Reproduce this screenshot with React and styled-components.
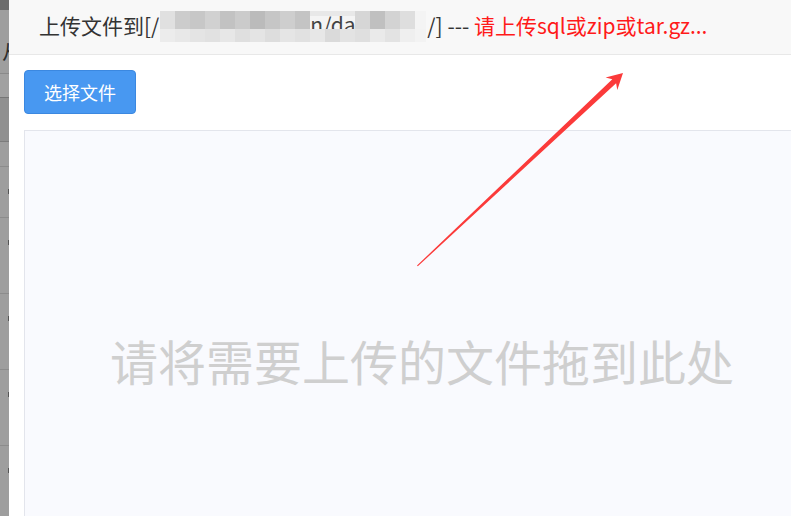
import React from 'react';
import styled, { createGlobalStyle } from 'styled-components';

const GlobalStyle = createGlobalStyle`
    html, body {
        margin: 0;
        padding: 0;
        overflow: hidden;
        background: #9c9c9c;
    }
    body {
        font-family: "Noto Sans CJK SC", "Noto Sans", sans-serif;
    }
`;

const backdropRows = [
    { h: 9, bg: '#6c6c6c', line: '#6c6c6c' },
    { h: 63, bg: '#9e9e9e', line: '#8a8a8a', glyph: '从' },
    { h: 23, bg: '#a1a1a1', line: '#767676' },
    { h: 43, bg: '#909090', line: '#7c7c7c' },
    { h: 24, bg: '#9e9e9e', line: '#8c8c8c' },
    { h: 50, bg: '#9e9e9e', line: '#8c8c8c', tick: true },
    { h: 75, bg: '#9e9e9e', line: '#8c8c8c', tick: true },
    { h: 75, bg: '#9e9e9e', line: '#8c8c8c', tick: true },
    { h: 75, bg: '#9e9e9e', line: '#8c8c8c', tick: true },
    { h: 75, bg: '#9e9e9e', line: '#8c8c8c', tick: true },
];

const mosaicTop = ['#e0e0e0', '#cccccc', '#c7c7c7', '#d1d1d1', '#c2c2c2', '#cbcbcb', '#bbbbbb', '#c6c6c6', '#cecece', '#c4c4c4'];
const mosaicTail = ['#d6d6d6', '#c0c0c0', '#d3d3d3', '#dedede'];
const mosaicBottom = ['#ececec', '#e8e8e8', '#e4e4e4', '#e1e1e1', '#e7e7e7', '#dfdfdf', '#e4e4e4', '#dddddd', '#e5e5e5', '#e1e1e1', '#e7e7e7', '#dadada', '#e3e3e3', '#dfdfdf', '#eaeaea', '#e3e3e3', '#efefef', '#f3f3f3'];

const App = () => {
    return (
        <>
            <GlobalStyle />
            <Page>
                <Backdrop>
                    {backdropRows.map((r, i) => (
                        <BackdropRow key={i} $h={r.h} $bg={r.bg} $line={r.line}>
                            {r.glyph && <Glyph>{r.glyph}</Glyph>}
                            {r.tick && <Tick />}
                        </BackdropRow>
                    ))}
                </Backdrop>
                <Modal>
                    <Title>
                        上传文件到[/
                        <Mosaic>
                            <MosaicRow $h={18}>
                                {mosaicTop.map((c, i) => (
                                    <Cell key={i} $w={15} $bg={c} />
                                ))}
                                <PeekText>n/da</PeekText>
                                {mosaicTail.map((c, i) => (
                                    <Cell key={i} $w={15} $bg={c} />
                                ))}
                                <Cell $w={11} $bg="#f4f4f4" />
                            </MosaicRow>
                            <MosaicRow $h={13}>
                                {mosaicBottom.map((c, i) => (
                                    <Cell key={i} $w={15} $bg={c} />
                                ))}
                            </MosaicRow>
                        </Mosaic>
                        /] --- <Hint>请上传sql或zip或tar.gz...</Hint>
                    </Title>
                    <Body>
                        <PickButton>选择文件</PickButton>
                        <DropZone>请将需要上传的文件拖到此处</DropZone>
                    </Body>
                </Modal>
                <Arrow viewBox="0 0 240 220">
                    <polygon
                        fill="#fb3a3a"
                        points="17,205.5 212.3,19.3 205.6,17.6 223,13 217.3,29.9 216.1,23.2 17.8,206.3"
                    />
                </Arrow>
            </Page>
        </>
    );
};

const Page = styled.div`
    position: relative;
    display: flex;
    width: 791px;
    height: 516px;
    overflow: hidden;
`;

const Backdrop = styled.div`
    width: 9px;
    flex-shrink: 0;
    display: flex;
    flex-direction: column;
    overflow: hidden;
`;

const BackdropRow = styled.div`
    position: relative;
    height: ${p => p.$h}px;
    flex-shrink: 0;
    background: ${p => p.$bg};
    border-bottom: 1px solid ${p => p.$line};
    overflow: hidden;
    display: flex;
    align-items: center;
`;

const Glyph = styled.span`
    margin-left: 2px;
    margin-top: 20px;
    font-size: 20px;
    line-height: 1;
    color: #2e2e2e;
`;

const Tick = styled.span`
    position: absolute;
    right: 0;
    top: 22px;
    width: 1px;
    height: 5px;
    background: #555;
`;

const Modal = styled.div`
    width: 826px;
    flex-shrink: 0;
    display: flex;
    flex-direction: column;
    background: #fff;
    box-shadow: -1px 0 3px rgba(0, 0, 0, 0.15);
`;

const Title = styled.div`
    height: 55px;
    flex-shrink: 0;
    box-sizing: border-box;
    padding: 0 0 5px 30px;
    display: flex;
    align-items: center;
    background: #f8f8f8;
    border-bottom: 1px solid #e8e8e8;
    font-size: 21px;
    color: #333;
    white-space: pre;
`;

const Mosaic = styled.span`
    display: inline-flex;
    flex-direction: column;
    width: 266px;
    height: 31px;
    margin: 4px 1px 0;
    overflow: hidden;
`;

const MosaicRow = styled.span`
    display: flex;
    height: ${p => p.$h}px;
    flex-shrink: 0;
`;

const Cell = styled.span`
    display: block;
    width: ${p => p.$w}px;
    flex-shrink: 0;
    background: ${p => p.$bg};
`;

const PeekText = styled.span`
    display: block;
    width: 45px;
    flex-shrink: 0;
    font-size: 21px;
    line-height: 18px;
    height: 18px;
    overflow: hidden;
    color: #444;
    background: linear-gradient(#e8e8e8 0 5px, #f4f4f4 5px);
    padding-top: 4px;
    box-sizing: border-box;
`;

const Hint = styled.span`
    color: #ff1a1a;
`;

const Body = styled.div`
    display: flex;
    flex-direction: column;
    align-items: flex-start;
    gap: 16px;
    padding: 15px;
`;

const PickButton = styled.button`
    width: 112px;
    height: 44px;
    flex-shrink: 0;
    border: 1px solid #3b88e0;
    border-radius: 4px;
    background: #4898f1;
    color: #fff;
    font-family: "Noto Sans CJK SC", sans-serif;
    font-size: 18px;
    cursor: pointer;
`;

const DropZone = styled.div`
    width: 796px;
    height: 460px;
    flex-shrink: 0;
    box-sizing: border-box;
    border: 1px solid #e3e5ec;
    background: #f9fafe;
    display: flex;
    align-items: center;
    justify-content: center;
    font-size: 48px;
    color: #cfcfcf;
`;

const Arrow = styled.svg`
    position: absolute;
    left: 400px;
    top: 60px;
    width: 240px;
    height: 220px;
    pointer-events: none;
`;

export default App;
